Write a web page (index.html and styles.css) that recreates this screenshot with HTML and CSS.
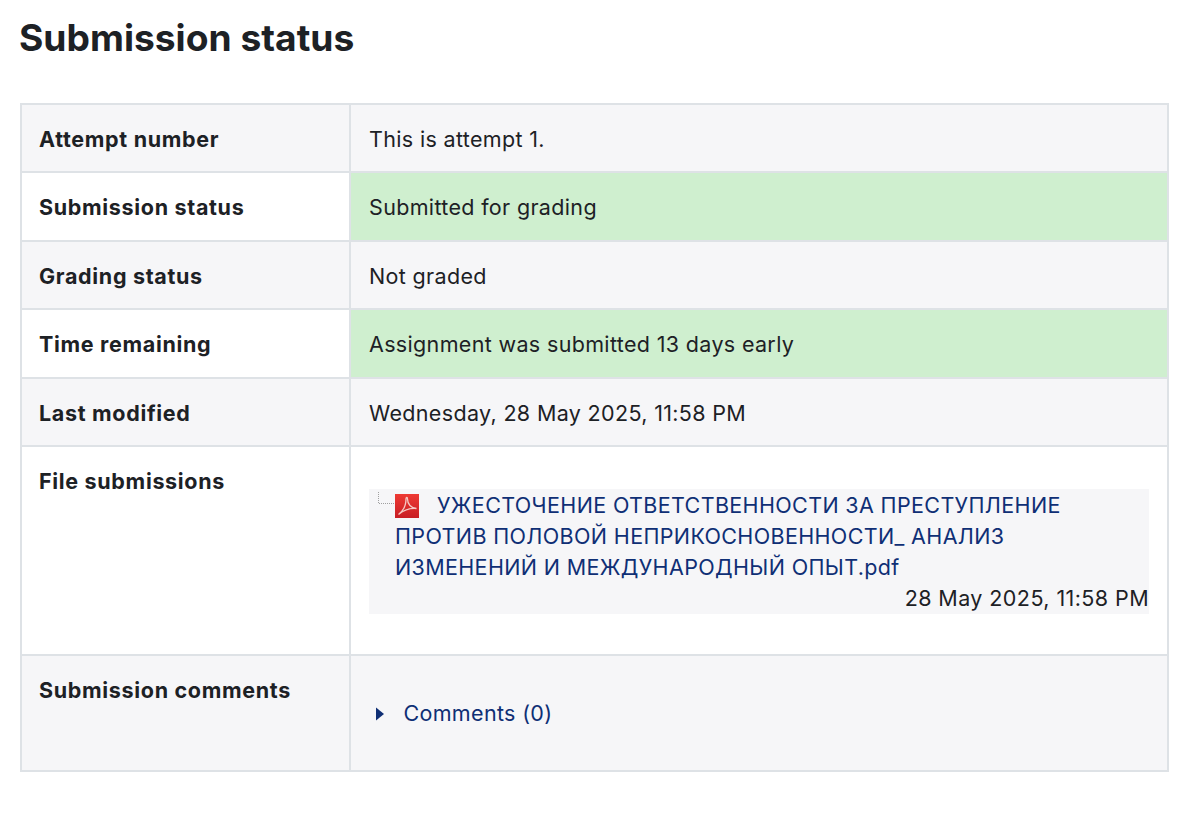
FILE: index.html
```html
<!DOCTYPE html>
<html lang="en">
<head>
  <meta charset="UTF-8">
  <title>Submission status</title>
  <link rel="stylesheet" href="styles.css">
</head>
<body>

<h1>Submission status</h1>

<table class="status-table">
  <tbody>
    <tr class="row-odd">
      <th>Attempt number</th>
      <td>This is attempt 1.</td>
    </tr>
    <tr>
      <th>Submission status</th>
      <td class="submitted">Submitted for grading</td>
    </tr>
    <tr class="row-odd">
      <th>Grading status</th>
      <td>Not graded</td>
    </tr>
    <tr>
      <th>Time remaining</th>
      <td class="submitted">Assignment was submitted 13 days early</td>
    </tr>
    <tr class="row-odd">
      <th>Last modified</th>
      <td>Wednesday, 28 May 2025, 11:58 PM</td>
    </tr>
    <tr class="row-files">
      <th>File submissions</th>
      <td>
        <div class="file-box">
          <svg class="tree-line" width="18" height="14" viewBox="0 0 18 14">
            <path d="M1.500 0V11.500H18" fill="none" stroke="#a0a0a0" stroke-width="1" stroke-dasharray="1 1"/>
          </svg>
          <div class="file-text">
            <svg class="pdf-icon" width="24" height="24" viewBox="0 0 24 24">
              <defs>
                <linearGradient id="pdfRed" x1="0" y1="0" x2="0" y2="1">
                  <stop offset="0" stop-color="#ee3a34"/>
                  <stop offset="1" stop-color="#c81e24"/>
                </linearGradient>
              </defs>
              <rect width="24" height="24" fill="url(#pdfRed)"/>
              <path d="M3.500 20.500C8 17 11 11 11 5C11 3 12.500 3 12.500 5C12.500 10 16 14 21.500 14.500C16 14 9 16 3.500 20.500Z" fill="none" stroke="#f5c9c4" stroke-width="1.300"/>
            </svg><a class="file-link" href="#">УЖЕСТОЧЕНИЕ ОТВЕТСТВЕННОСТИ ЗА ПРЕСТУПЛЕНИЕ ПРОТИВ ПОЛОВОЙ НЕПРИКОСНОВЕННОСТИ_ АНАЛИЗ ИЗМЕНЕНИЙ И МЕЖДУНАРОДНЫЙ ОПЫТ.pdf</a>
            <div class="file-date">28 May 2025, 11:58 PM</div>
          </div>
        </div>
      </td>
    </tr>
    <tr class="row-odd row-comments">
      <th>Submission comments</th>
      <td>
        <a class="comments-link" href="#">
          <svg class="caret" width="10" height="14" viewBox="0 0 10 14"><path d="M1 0.500L9 7L1 13.500Z" fill="#0f2f75"/></svg>
          Comments (0)
        </a>
      </td>
    </tr>
  </tbody>
</table>

</body>
</html>
```

FILE: styles.css
```css
body {
  margin: 0;
  padding: 0 31px 0 20px;
  font-family: Inter, "Noto Sans", sans-serif;
  font-size: 21.5px;
  letter-spacing: 0.34px;
  color: #1d2125;
  background: white;
}

h1 {
  margin: 0 0 0 -1px;
  padding-top: 13px;
  height: 103px;
  box-sizing: border-box;
  font-size: 37.2px;
  line-height: 50px;
  font-weight: 700;
  letter-spacing: 0;
}

.status-table {
  width: 100%;
  border-collapse: collapse;
  table-layout: fixed;
}

th, td {
  border: 2px solid #dee2e6;
  padding: 18px 18px 16px 18px;
  height: 68.4px;
  box-sizing: border-box;
  line-height: 32px;
  text-align: left;
  vertical-align: top;
  font-weight: 400;
}

th {
  width: 329px;
  padding-left: 17px;
  font-weight: 700;
  letter-spacing: 0.68px;
}

.row-odd th, .row-odd td {
  background-color: #f6f6f8;
}

td.submitted {
  background-color: #cfefcf;
}

.row-files td, .row-files th {
  height: 209px;
}

.row-comments th, .row-comments td {
  height: 116px;
}

.file-box {
  display: flex;
  background-color: #f6f6f8;
  margin-top: 24px;
  width: 780px;
}

.tree-line {
  flex: none;
  margin: 3px 0 0 8px;
}

.file-text {
  flex: 1;
  padding-top: 1px;
  line-height: 31px;
}

.pdf-icon {
  vertical-align: -5px;
  margin-right: 18px;
}

.file-link {
  color: #0f2f75;
  text-decoration: none;
  letter-spacing: 0.36px;
}

.file-date {
  text-align: right;
  letter-spacing: 0.42px;
}

.comments-link {
  display: block;
  margin-top: 23px;
  margin-left: 6px;
  color: #0f2f75;
  text-decoration: none;
}

.caret {
  margin-right: 12px;
}
```
